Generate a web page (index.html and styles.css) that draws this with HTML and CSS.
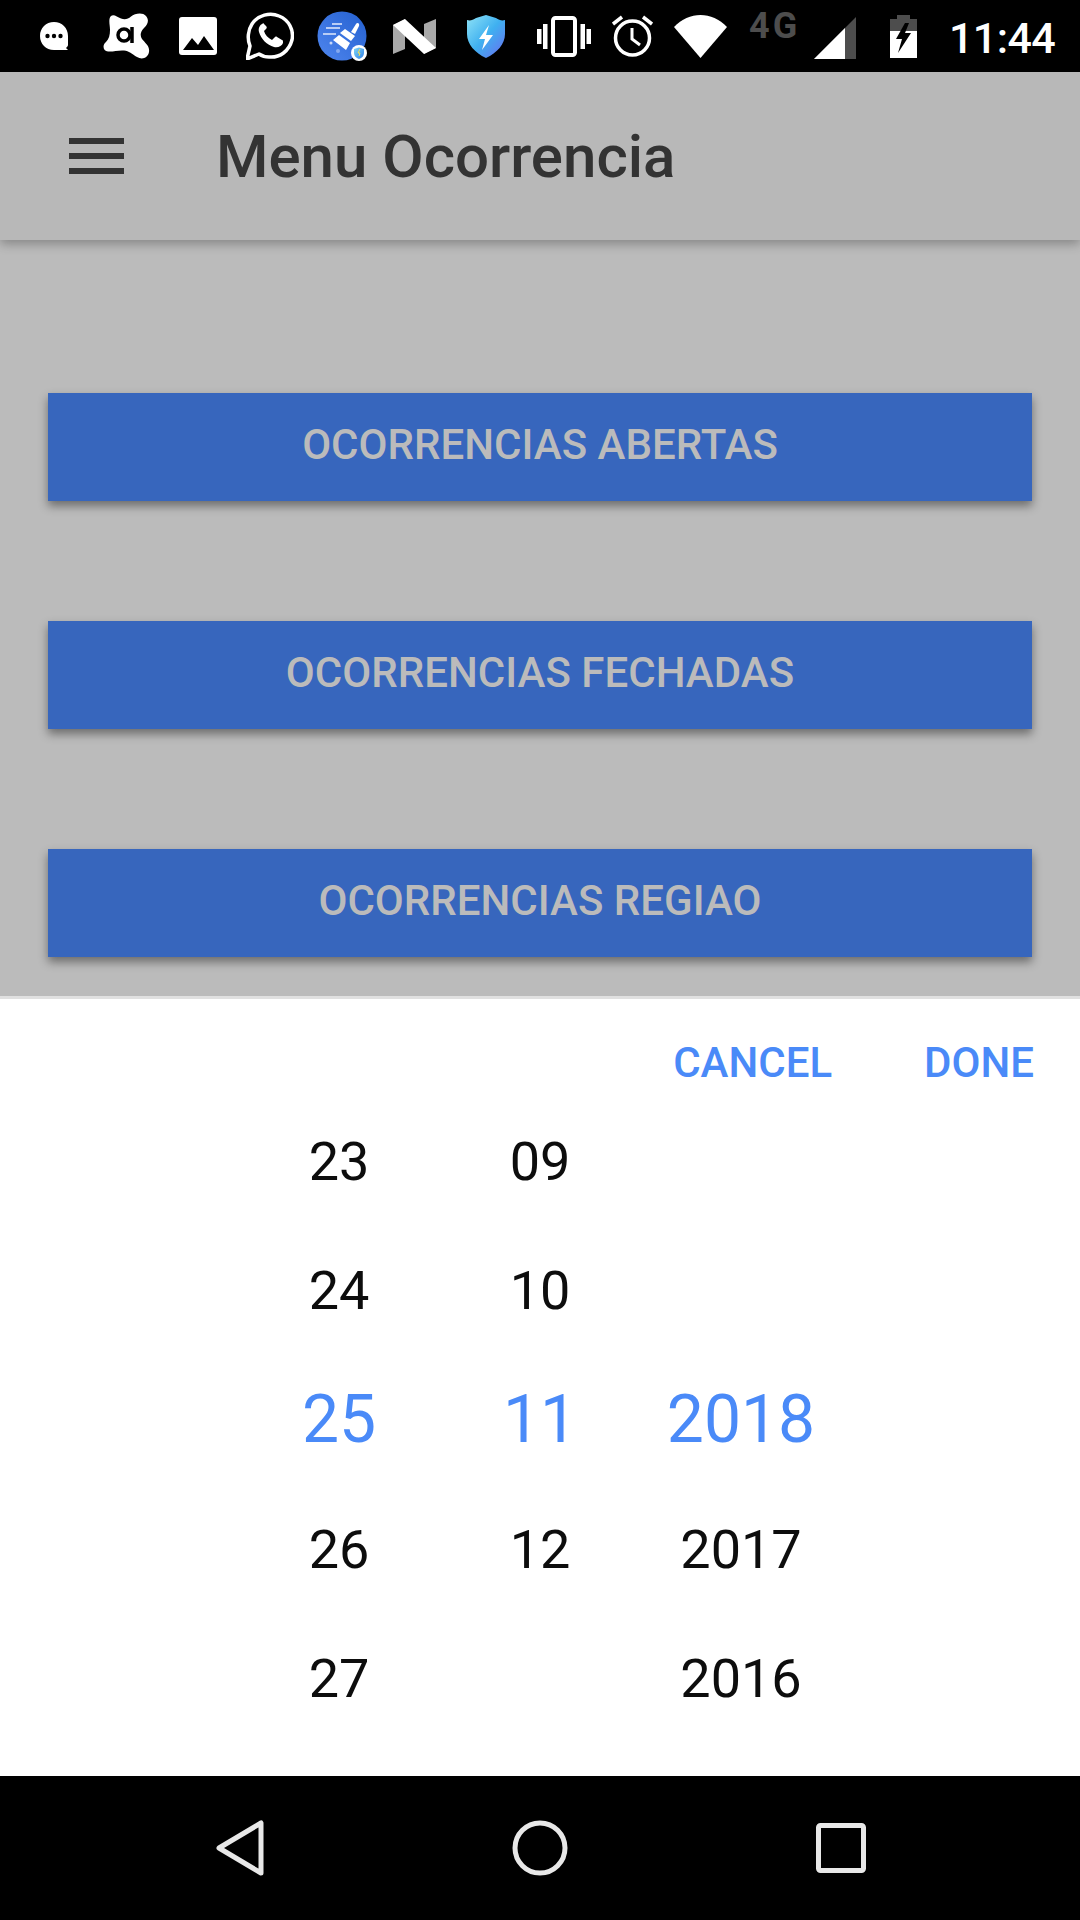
FILE: index.html
```html
<!DOCTYPE html>
<html lang="pt">
<head>
    <meta charset="UTF-8">
    <meta name="viewport" content="width=device-width, initial-scale=1.0">
    <title>Menu Ocorrencia</title>
    <link rel="stylesheet" href="styles.css">
</head>
<body>
    <div class="status-bar">
        <svg class="ic-chat" width="28" height="28" viewBox="0 0 28 28">
            <path d="M14 0C6 0 0 6 0 14s6 14 14 14h14l-2-2c1-1 2-2 2-3V14C28 6 22 0 14 0z" fill="#fff"/>
            <circle cx="7.500" cy="14" r="2.200" fill="#000"/><circle cx="14" cy="14" r="2.200" fill="#000"/><circle cx="20.500" cy="14" r="2.200" fill="#000"/>
        </svg>
        <svg class="ic-avast" width="47" height="47" viewBox="0 0 47 47">
            <path d="M8 3C11 1 14 4 18 5.500C22 7 25 6 28 3.500C32 0 40-1 43 3C47 8 44 12 41 15C37 19 37 23 39 26C42 30 47 33 46 39C45 45 39 47 34 44C29 41 26 38 21 37.500C15 37 10 39 5 38.500C0 38-1 32 3 29C6 26 7 22 7 17C7 12 5 6 8 3z" fill="#fff"/>
            <circle cx="21" cy="22" r="6" fill="none" stroke="#000" stroke-width="3.500"/>
            <path d="M29 14v16" stroke="#000" stroke-width="3.500" fill="none"/>
        </svg>
        <svg class="ic-image" width="38" height="38" viewBox="0 0 38 38">
            <path d="M3 0h32a3 3 0 0 1 3 3v32a3 3 0 0 1-3 3H3a3 3 0 0 1-3-3V3a3 3 0 0 1 3-3z" fill="#fff"/>
            <path d="M4 33l9-12 6 7 6-9 10 14z" fill="#000"/>
        </svg>
        <svg class="ic-whatsapp" width="48" height="48" viewBox="0 0 48 48">
            <path d="M1 47l3-13C1 27 2 18 6 12 12 3 24 0 33 4c10 4 15 14 13 24-3 11-12 18-23 17-4 0-7-1-10-3z" fill="none" stroke="#fff" stroke-width="3.500" stroke-linejoin="round"/>
            <path d="M16 12c-2 1-4 4-3 8 2 7 8 13 15 15 4 1 8-1 9-4 0-2 0-3-1-3l-5-3c-1-1-2 0-3 1l-2 2c-4-2-7-5-8-9l2-2c1-1 1-2 0-3l-2-2c0-1-1-1-2 0z" fill="#fff"/>
        </svg>
        <svg class="ic-cleaner" width="50" height="50" viewBox="0 0 50 50">
            <defs>
                <linearGradient id="cleanerFill" x1="1" y1="0" x2="0" y2="1">
                    <stop offset="0" stop-color="#2460d0"/>
                    <stop offset="1" stop-color="#4f86ee"/>
                </linearGradient>
                <linearGradient id="tinyShield" x1="0" y1="0" x2="1" y2="1">
                    <stop offset="0" stop-color="#7fd6f5"/>
                    <stop offset="1" stop-color="#2f7fe8"/>
                </linearGradient>
            </defs>
            <circle cx="25" cy="25" r="24.500" fill="url(#cleanerFill)"/>
            <path d="M15 13h10M9 17h14M6 23h13" stroke="#b9cdf5" stroke-width="2" fill="none"/>
            <path d="M34 21l5-8c1-2 4-1 3 2l-4 8z" fill="#fff"/>
            <path d="M23 22l5-4 10 7-4 5z M22 24l11 8-4 7-13-10z" fill="#fff"/>
            <circle cx="14" cy="32" r="1.500" fill="#c8d8f8"/>
            <circle cx="21" cy="40" r="2" fill="#86a9ee"/>
            <circle cx="42" cy="42" r="8" fill="#fff"/>
            <path d="M37 38l5-1.500 5 1.500v4c0 3-2 5-5 6-3-1-5-3-5-6z" fill="url(#tinyShield)"/>
            <path d="M43 38l-2 4h2l-1 3" stroke="#f4e04d" stroke-width="1" fill="none"/>
        </svg>
        <svg class="ic-n" width="43" height="35" viewBox="0 0 43 35">
            <path d="M0 6v29l12-5V0z" fill="#a9a9a9"/>
            <path d="M43 0v29l-12 6V5z" fill="#a9a9a9"/>
            <path d="M0 6L12 0l31 29-12 6z" fill="#fff"/>
        </svg>
        <svg class="ic-shield" width="38" height="43" viewBox="0 0 38 43">
            <defs>
                <linearGradient id="shieldFill" x1="0" y1="0" x2="1" y2="1">
                    <stop offset="0" stop-color="#8fe3f6"/>
                    <stop offset="0.500" stop-color="#3fb0f0"/>
                    <stop offset="1" stop-color="#6a6cf0"/>
                </linearGradient>
            </defs>
            <path d="M0 5c3 1 6 0 9-2l10-3 10 3c3 2 6 3 9 2v14c0 10-8 19-19 24C8 38 0 29 0 19z" fill="url(#shieldFill)"/>
            <path d="M22 10L12 24h6l-3 11 11-15h-7z" fill="#fff"/>
        </svg>
        <svg class="ic-vibrate" width="54" height="41" viewBox="0 0 54 41">
            <rect x="16" y="2" width="22" height="37" rx="2.500" fill="none" stroke="#fff" stroke-width="4"/>
            <path d="M0 13h4.500v15H0zM6 8h4.500v25H6zM43.500 8H48v25h-4.500zM49.500 13H54v15h-4.500z" fill="#fff"/>
        </svg>
        <svg class="ic-alarm" width="41" height="42" viewBox="0 0 41 42">
            <circle cx="20.500" cy="23" r="17" fill="none" stroke="#fff" stroke-width="3.500"/>
            <path d="M1 9l9-7M40 9l-9-7" stroke="#fff" stroke-width="3.500" fill="none"/>
            <path d="M20 13v11l8 6" stroke="#fff" stroke-width="3" fill="none"/>
        </svg>
        <svg class="ic-wifi" width="53" height="43" viewBox="0 0 53 43">
            <path d="M0 12C15-4 38-4 53 12L26.500 43z" fill="#fff"/>
        </svg>
        <span class="net-type">4G</span>
        <svg class="ic-signal" width="42" height="42" viewBox="0 0 42 42">
            <path d="M0 42L42 0v42z" fill="#4d4d4d"/>
            <path d="M0 42l31-31v31z" fill="#fff"/>
        </svg>
        <svg class="ic-battery" width="27" height="43" viewBox="0 0 27 43">
            <path d="M7 0h13v4h7v39H0V4h7z" fill="#4d4d4d"/>
            <path d="M0 16h27v27H0z" fill="#fff"/>
            <path d="M15 8l-9 16h6l-4 14 13-20h-6l4-10z" fill="#000"/>
        </svg>
        <span class="clock">11:44</span>
    </div>

    <header class="app-bar">
        <div class="hamburger"><span></span><span></span><span></span></div>
        <h1 class="app-title">Menu Ocorrencia</h1>
    </header>

    <main class="menu">
        <button class="menu-btn">OCORRENCIAS ABERTAS</button>
        <button class="menu-btn">OCORRENCIAS FECHADAS</button>
        <button class="menu-btn">OCORRENCIAS REGIAO</button>
    </main>

    <section class="picker">
        <div class="picker-actions">
            <span class="picker-action">CANCEL</span>
            <span class="picker-action">DONE</span>
        </div>
        <div class="wheel">
            <span>23</span><span>09</span><span></span>
            <span>24</span><span>10</span><span></span>
            <span class="sel">25</span><span class="sel">11</span><span class="sel">2018</span>
            <span>26</span><span>12</span><span>2017</span>
            <span>27</span><span></span><span>2016</span>
        </div>
    </section>

    <nav class="nav-bar">
        <svg width="48" height="56" viewBox="0 0 48 56">
            <path d="M45 3v50L3 28z" fill="none" stroke="#e8e8e8" stroke-width="5" stroke-linejoin="round"/>
        </svg>
        <svg width="56" height="56" viewBox="0 0 56 56">
            <circle cx="28" cy="28" r="25" fill="none" stroke="#e8e8e8" stroke-width="5"/>
        </svg>
        <svg width="50" height="50" viewBox="0 0 50 50">
            <rect x="2.500" y="2.500" width="45" height="45" rx="2" fill="none" stroke="#e8e8e8" stroke-width="5"/>
        </svg>
    </nav>
</body>
</html>
```

FILE: styles.css
```css
* {
    box-sizing: border-box;
}
body {
    margin: 0;
    width: 1080px;
    height: 1920px;
    display: flex;
    flex-direction: column;
    font-family: Roboto, "Liberation Sans", sans-serif;
    background-color: #bbbbbb;
    overflow: hidden;
}

/* status bar */
.status-bar {
    height: 72px;
    background-color: #000;
    display: flex;
    align-items: center;
    flex-shrink: 0;
}
.status-bar svg {
    flex-shrink: 0;
}
.ic-chat { margin-left: 40px; }
.ic-avast { margin-left: 35px; }
.ic-image { margin-left: 29px; }
.ic-whatsapp { margin-left: 29px; }
.ic-cleaner { margin-left: 23px; }
.ic-n { margin-left: 26px; }
.ic-shield { margin-left: 31px; }
.ic-vibrate { margin-left: 32px; }
.ic-alarm { margin-left: 21px; }
.ic-wifi { margin-left: 21px; }
.ic-signal { margin-left: 15px; margin-top: 4px; }
.ic-battery { margin-left: 34px; }
.net-type {
    width: 50px;
    margin-left: 22px;
    margin-bottom: 21px;
    font-size: 36px;
    line-height: 26px;
    font-weight: 700;
    letter-spacing: 3px;
    color: #4d4d4d;
}
.clock {
    margin-left: 32px;
    margin-top: 3px;
    font-size: 43px;
    font-weight: 500;
    letter-spacing: -0.6px;
    color: #fff;
    white-space: nowrap;
}

/* toolbar */
.app-bar {
    height: 168px;
    flex-shrink: 0;
    background-color: #b8b8b8;
    display: flex;
    align-items: center;
    padding-left: 69px;
    box-shadow: 0 4px 10px rgba(0, 0, 0, 0.28);
}
.hamburger {
    width: 55px;
    display: flex;
    flex-direction: column;
    gap: 9px;
}
.hamburger span {
    height: 6px;
    background-color: #333;
}
.app-title {
    margin: 0 0 0 92px;
    font-size: 60px;
    font-weight: 500;
    color: #333;
}

/* buttons */
.menu {
    height: 756px;
    flex-shrink: 0;
    padding: 153px 48px 0;
    display: flex;
    flex-direction: column;
    gap: 120px;
}
.menu-btn {
    height: 108px;
    flex-shrink: 0;
    border: none;
    background-color: #3766bd;
    color: #bbbbbb;
    font-family: inherit;
    font-size: 42px;
    font-weight: 500;
    letter-spacing: 0.03px;
    padding: 0 0 6px;
    box-shadow: 0 5px 9px rgba(0, 0, 0, 0.42);
}

/* date picker */
.picker {
    height: 780px;
    flex-shrink: 0;
    background-color: #fff;
    border-top: 3px solid #e0e0e0;
}
.picker-actions {
    display: flex;
    justify-content: flex-end;
    gap: 92px;
    padding: 39px 46px 0 0;
}
.picker-action {
    font-size: 42px;
    line-height: 50px;
    font-weight: 500;
    color: #4a8af8;
}
.wheel {
    margin-top: 9px;
    display: grid;
    grid-template-columns: repeat(3, 201px);
    grid-auto-rows: 129.200px;
    justify-content: center;
    align-items: center;
    justify-items: center;
    font-size: 54px;
    color: #0d0d0d;
}
.wheel .sel {
    font-size: 66px;
    color: #4a8af8;
}

/* nav bar */
.nav-bar {
    flex: 1;
    background-color: #000;
    display: flex;
    align-items: center;
    gap: 248px;
    padding-left: 216px;
}
```
